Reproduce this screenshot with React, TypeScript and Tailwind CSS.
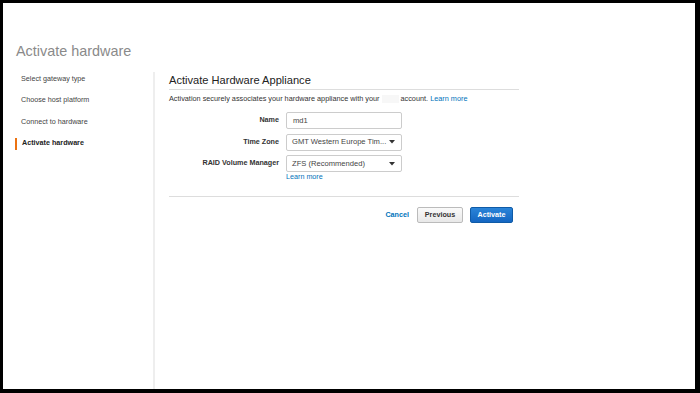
const steps = [
  { label: 'Select gateway type', active: false },
  { label: 'Choose host platform', active: false },
  { label: 'Connect to hardware', active: false },
  { label: 'Activate hardware', active: true },
]

function Caret() {
  return (
    <svg width="6" height="4" viewBox="0 0 6 4" className="shrink-0">
      <path d="M0 0h6L3 3.5z" fill="#333" />
    </svg>
  )
}

function Field({ label, children }: { label: string; children: React.ReactNode }) {
  return (
    <div className="flex items-center">
      <label className="w-[110px] text-right text-[7.2px] font-bold text-[#333]">
        {label}
      </label>
      <div className="ml-[7px]">{children}</div>
    </div>
  )
}

function Select({ value }: { value: string }) {
  return (
    <div className="flex h-[17px] w-[116px] items-center justify-between rounded-[2px] border border-[#ccc] bg-white pl-[5px] pr-[6px] text-[7.6px] text-[#444]">
      <span>{value}</span>
      <Caret />
    </div>
  )
}

export default function App() {
  return (
    <div className="h-[393px] w-[700px] bg-black pb-[4px] pl-[3px] pr-[5px] pt-[3px] font-['Liberation_Sans',Arial,sans-serif]">
      <div className="flex h-full flex-col bg-white">
        <h1 className="pl-[13px] pt-[40px] text-[14.4px] leading-[17px] text-[#8a8a8a]">
          Activate hardware
        </h1>

        <div className="mt-[12px] flex flex-1">
          <nav className="flex w-[150px] flex-col gap-[9.5px] pt-[1px]">
            {steps.map((step) => (
              <div
                key={step.label}
                className={
                  step.active
                    ? 'ml-[12px] flex h-[12px] items-center border-l-2 border-[#ec7211] pl-[5px] text-[7.2px] font-bold text-[#222]'
                    : 'flex h-[12px] items-center pl-[18px] text-[7.2px] text-[#444]'
                }
              >
                {step.label}
              </div>
            ))}
          </nav>

          <div className="w-[2px] bg-[#eeeeee]" />

          <main className="w-[364px] pl-[14px]">
            <h2 className="mt-[2px] border-b border-[#dddddd] pb-[2px] text-[11.1px] leading-[13px] text-[#222]">
              Activate Hardware Appliance
            </h2>
            <p className="mt-[4px] text-[7.3px] leading-[9px] text-[#333]">
              Activation securely associates your hardware appliance with your
              <span className="mx-[2px] inline-block h-[8px] w-[17px] bg-[#f7f7f7] align-middle" />
              account.{' '}
              <a className="text-[#0073bb]">Learn more</a>
            </p>

            <div className="mt-[9px] flex flex-col gap-[4.5px]">
              <Field label="Name">
                <div className="flex h-[17px] w-[116px] items-center rounded-[2px] border border-[#ccc] bg-white pl-[6px] text-[7.6px] text-[#444]">
                  md1
                </div>
              </Field>
              <Field label="Time Zone">
                <Select value="GMT Western Europe Tim..." />
              </Field>
              <div>
                <Field label="RAID Volume Manager">
                  <Select value="ZFS (Recommended)" />
                </Field>
                <a className="ml-[117px] block text-[7.2px] leading-[10px] text-[#0073bb]">
                  Learn more
                </a>
              </div>
            </div>

            <div className="mt-[14px] border-t border-[#dddddd]" />

            <div className="mt-[10px] flex items-center justify-end gap-[7px] pr-[6px]">
              <a className="mr-[1px] text-[7.2px] font-bold text-[#0073bb]">Cancel</a>
              <button className="h-[16px] w-[46px] rounded-[2px] border border-[#bbb] bg-gradient-to-b from-[#fafafa] to-[#e8e8e8] text-[7.2px] font-bold text-[#333]">
                Previous
              </button>
              <button className="h-[16px] w-[43px] rounded-[2px] border border-[#0f5ba7] bg-gradient-to-b from-[#2a84d8] to-[#1466c2] text-[7.2px] font-bold text-white">
                Activate
              </button>
            </div>
          </main>
        </div>
      </div>
    </div>
  )
}
